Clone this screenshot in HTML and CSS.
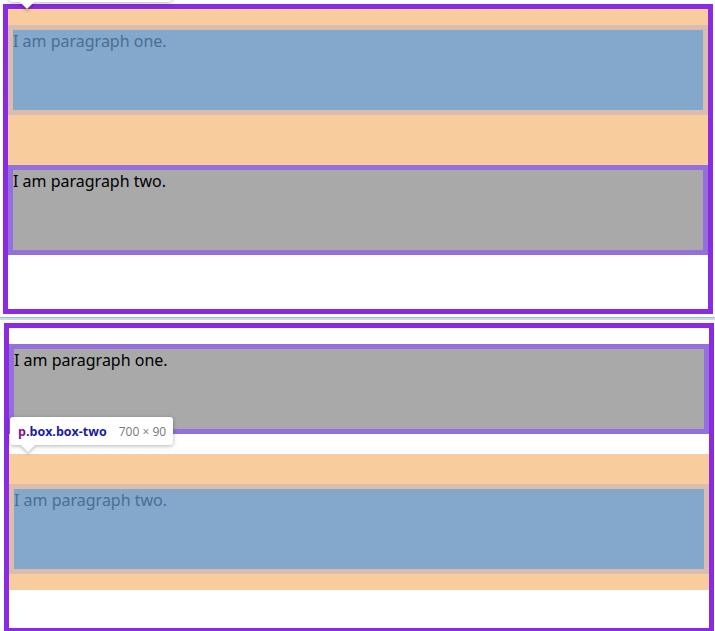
FILE: index.html
```html
<!DOCTYPE html>
<html>
<head>
<meta charset="utf-8">
<link rel="stylesheet" href="styles.css">
</head>
<body>
<div class="shot shot-a">
  <div class="frame">
    <div class="hl-margin hl-m1"><p class="box hl">I am paragraph one.</p></div>
    <p class="box plain">I am paragraph two.</p>
  </div>
  <div class="tip tip-top"></div>
</div>
<div class="sep"></div>
<div class="shot shot-b">
  <div class="frame">
    <p class="box plain b1">I am paragraph one.</p>
    <div class="hl-margin hl-m2"><p class="box hl">I am paragraph two.</p></div>
  </div>
  <div class="tip tip-bottom"><span class="tag">p</span><span class="cls">.box.box-two</span><span class="dim">700 × 90</span></div>
</div>
</body>
</html>
```

FILE: styles.css
```css
html, body {
  margin: 0;
  padding: 0;
  background: #ffffff;
}
body {
  position: relative;
  width: 715px;
  height: 631px;
  overflow: hidden;
  font-family: "Noto Sans", "Open Sans", sans-serif;
}
.shot {
  position: relative;
}
.shot-a {
  padding: 4px 0 0 3px;
}
.shot-b {
  padding: 3px 0 0 4px;
}
.frame {
  width: 700px;
  height: 300px;
  border: 5px solid #8a2be2;
}
.box {
  margin: 0;
  height: 80px;
  border: 5px solid #9370db;
  font-size: 16px;
  line-height: 22px;
  padding: 0;
}
.plain {
  background: #a9a9a9;
  color: #000000;
}
.hl {
  background: #83a8cb;
  border-color: #dabdaf;
  color: #496f91;
}
.hl-margin {
  background: #f8cc9d;
}
.hl-m1 {
  padding: 16px 0 50px;
}
.b1 {
  margin-top: 16px;
}
.hl-m2 {
  margin-top: 20px;
  padding: 30px 0 16px;
}
.sep {
  margin-top: 3px;
  height: 2px;
  border-top: 1px solid #a9b8c9;
  background: #c9dcef;
}
.tip {
  position: absolute;
  display: flex;
  align-items: center;
  height: 28px;
  width: 163px;
  box-sizing: border-box;
  padding-left: 8px;
  background: #ffffff;
  border-radius: 3px;
  box-shadow: 0 1px 4px rgba(0, 0, 0, 0.3);
  font-family: "Open Sans", "Noto Sans", sans-serif;
  font-size: 12.5px;
  white-space: nowrap;
}
.tip::after {
  content: "";
  position: absolute;
  left: 13px;
  bottom: -5px;
  width: 10px;
  height: 10px;
  background: #ffffff;
  transform: rotate(45deg);
  box-shadow: 2px 2px 3px rgba(0, 0, 0, 0.18);
}
.tip::before {
  content: "";
  position: absolute;
  left: 8px;
  bottom: 0;
  width: 24px;
  height: 8px;
  background: #ffffff;
  z-index: 1;
}
.tip span {
  position: relative;
  z-index: 2;
}
.tag {
  color: #881280;
  font-weight: 700;
}
.cls {
  color: #1a1aa6;
  font-weight: 700;
}
.dim {
  color: #777777;
  font-size: 12px;
  margin-left: 12px;
}
.tip-top {
  left: 9px;
  top: -26px;
}
.tip-bottom {
  left: 10px;
  top: 97px;
}
```
